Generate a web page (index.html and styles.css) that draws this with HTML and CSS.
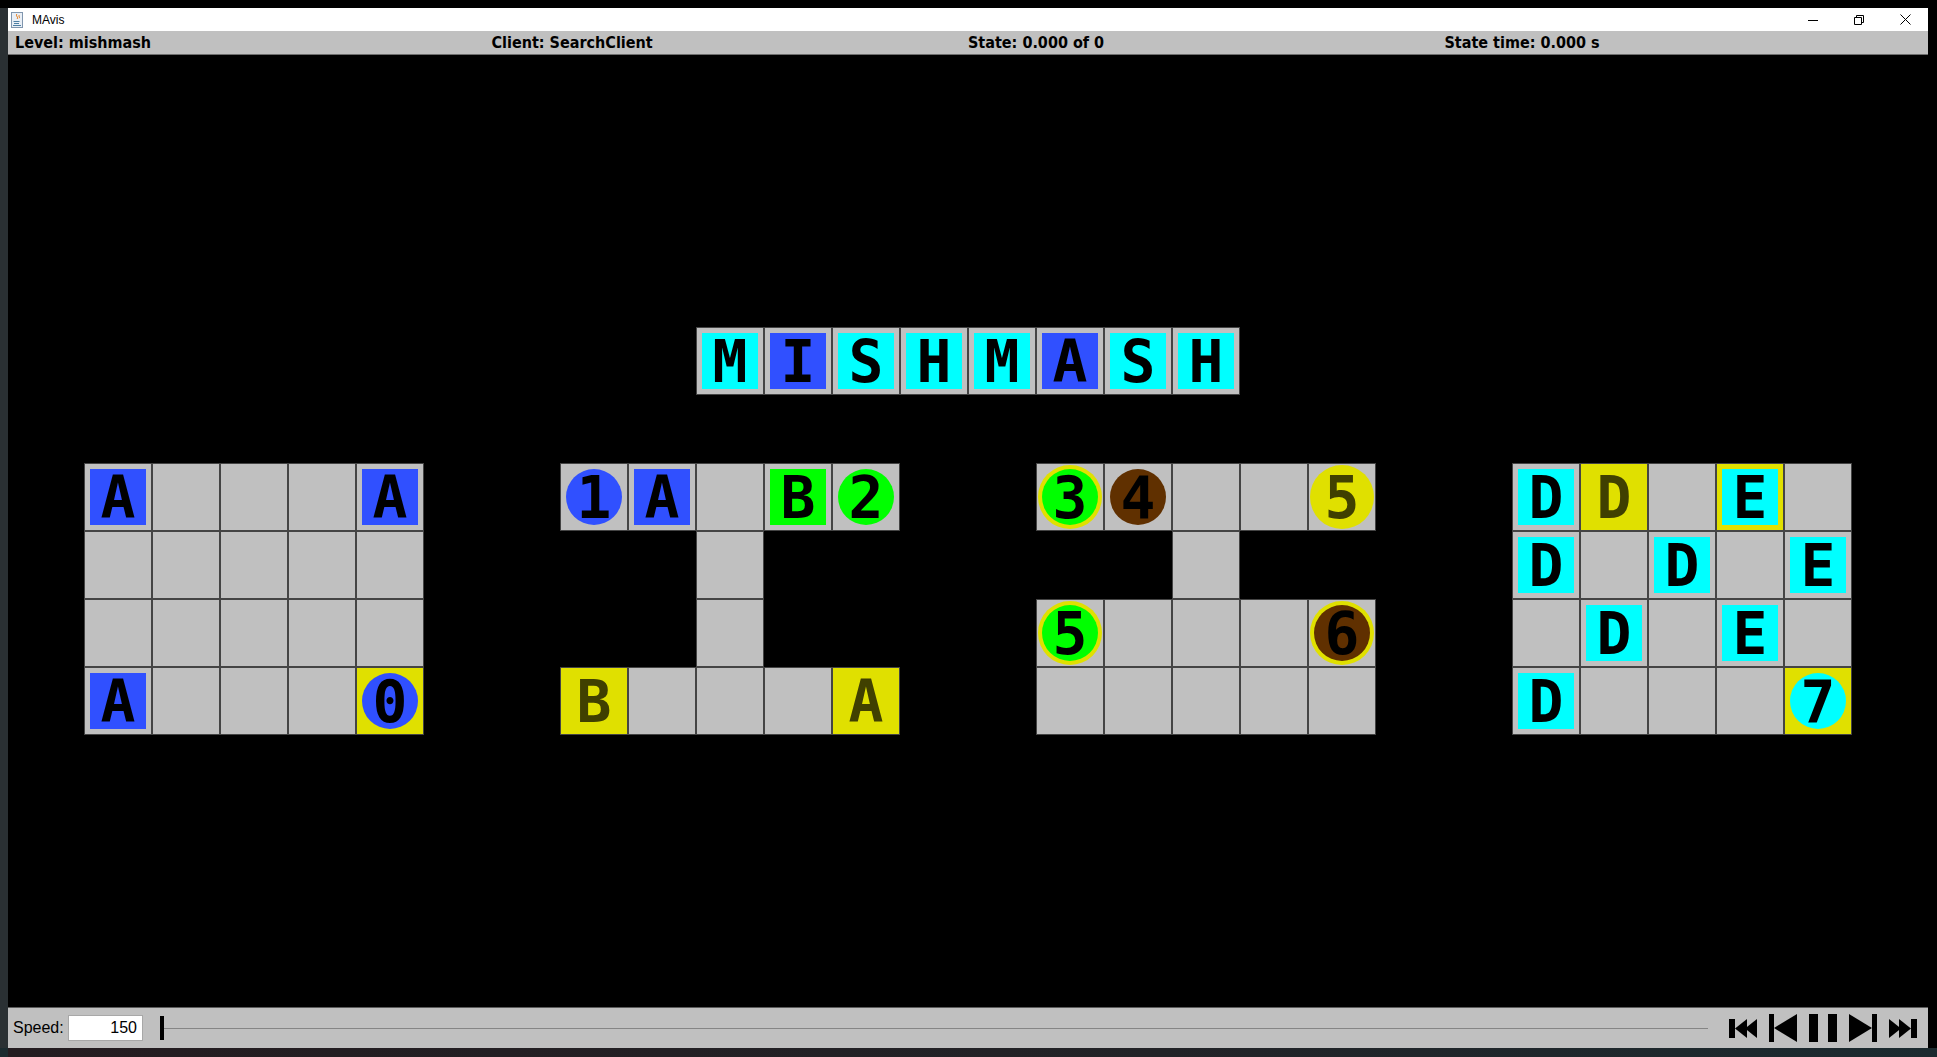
FILE: index.html
```html
<!DOCTYPE html>
<html lang="en">
<head>
<meta charset="utf-8">
<title>MAvis</title>
<link rel="stylesheet" href="styles.css">
</head>
<body>
<div class="desktop">
  <div class="side-left"></div>
  <div class="window-col">
    <div class="window">
      <div class="titlebar">
        <svg class="app-icon" width="12" height="16" viewBox="0 0 12 16">
          <rect x="0.5" y="0.5" width="11" height="15" fill="#e9eff6" stroke="#8096ae"/>
          <path d="M6 2c-2 2 2 3 0 5M8.2 3.2c-1 1 1 2 0 3" stroke="#e76f00" fill="none"/>
          <path d="M2.5 9.5h6M3 11.5h5M2 13.5h8" stroke="#4d7fa3" fill="none"/>
        </svg>
        <span class="app-title">MAvis</span>
        <div class="win-controls">
          <div class="win-btn"><svg width="10" height="10" viewBox="0 0 10 10"><path d="M0 5.5h10" stroke="#000" fill="none"/></svg></div>
          <div class="win-btn"><svg width="10" height="10" viewBox="0 0 10 10"><path d="M0.5 2.5h7v7h-7z M2.5 2.5v-2h7v7h-2" stroke="#000" fill="none"/></svg></div>
          <div class="win-btn"><svg width="11" height="11" viewBox="0 0 11 11"><path d="M0.5 0.5l10 10M10.5 0.5l-10 10" stroke="#000" fill="none"/></svg></div>
        </div>
      </div>
      <div class="statusbar">
        <span>Level: mishmash</span>
        <span>Client: SearchClient</span>
        <span>State: 0.000 of 0</span>
        <span>State time: 0.000 s</span>
      </div>
      <div class="canvas">
        <div class="map">
          <div class="title-row">
            <div class="cell floor"><div class="box cyan"><span class="glyph">M</span></div></div>
            <div class="cell floor"><div class="box blue"><span class="glyph">I</span></div></div>
            <div class="cell floor"><div class="box cyan"><span class="glyph">S</span></div></div>
            <div class="cell floor"><div class="box cyan"><span class="glyph">H</span></div></div>
            <div class="cell floor"><div class="box cyan"><span class="glyph">M</span></div></div>
            <div class="cell floor"><div class="box blue"><span class="glyph">A</span></div></div>
            <div class="cell floor"><div class="box cyan"><span class="glyph">S</span></div></div>
            <div class="cell floor"><div class="box cyan"><span class="glyph">H</span></div></div>
          </div>
          <div class="rooms">
            <div class="room">
              <div class="cell floor"><div class="box blue"><span class="glyph">A</span></div></div>
              <div class="cell floor"></div>
              <div class="cell floor"></div>
              <div class="cell floor"></div>
              <div class="cell floor"><div class="box blue"><span class="glyph">A</span></div></div>

              <div class="cell floor"></div>
              <div class="cell floor"></div>
              <div class="cell floor"></div>
              <div class="cell floor"></div>
              <div class="cell floor"></div>

              <div class="cell floor"></div>
              <div class="cell floor"></div>
              <div class="cell floor"></div>
              <div class="cell floor"></div>
              <div class="cell floor"></div>

              <div class="cell floor"><div class="box blue"><span class="glyph">A</span></div></div>
              <div class="cell floor"></div>
              <div class="cell floor"></div>
              <div class="cell floor"></div>
              <div class="cell floor goal"><div class="agent blue"><span class="glyph">0</span></div></div>
            </div>

            <div class="room">
              <div class="cell floor"><div class="agent blue"><span class="glyph">1</span></div></div>
              <div class="cell floor"><div class="box blue"><span class="glyph">A</span></div></div>
              <div class="cell floor"></div>
              <div class="cell floor"><div class="box green"><span class="glyph">B</span></div></div>
              <div class="cell floor"><div class="agent green"><span class="glyph">2</span></div></div>

              <div class="cell wall"></div>
              <div class="cell wall"></div>
              <div class="cell floor"></div>
              <div class="cell wall"></div>
              <div class="cell wall"></div>

              <div class="cell wall"></div>
              <div class="cell wall"></div>
              <div class="cell floor"></div>
              <div class="cell wall"></div>
              <div class="cell wall"></div>

              <div class="cell floor goal"><span class="glyph goal-text">B</span></div>
              <div class="cell floor"></div>
              <div class="cell floor"></div>
              <div class="cell floor"></div>
              <div class="cell floor goal"><span class="glyph goal-text">A</span></div>
            </div>

            <div class="room">
              <div class="cell floor"><div class="ring"><div class="agent green"><span class="glyph">3</span></div></div></div>
              <div class="cell floor"><div class="agent brown"><span class="glyph">4</span></div></div>
              <div class="cell floor"></div>
              <div class="cell floor"></div>
              <div class="cell floor"><div class="ring"><span class="glyph goal-text">5</span></div></div>

              <div class="cell wall"></div>
              <div class="cell wall"></div>
              <div class="cell floor"></div>
              <div class="cell wall"></div>
              <div class="cell wall"></div>

              <div class="cell floor"><div class="ring"><div class="agent green"><span class="glyph">5</span></div></div></div>
              <div class="cell floor"></div>
              <div class="cell floor"></div>
              <div class="cell floor"></div>
              <div class="cell floor"><div class="ring"><div class="agent brown"><span class="glyph">6</span></div></div></div>

              <div class="cell floor"></div>
              <div class="cell floor"></div>
              <div class="cell floor"></div>
              <div class="cell floor"></div>
              <div class="cell floor"></div>
            </div>

            <div class="room">
              <div class="cell floor"><div class="box cyan"><span class="glyph">D</span></div></div>
              <div class="cell floor goal"><span class="glyph goal-text">D</span></div>
              <div class="cell floor"></div>
              <div class="cell floor goal"><div class="box cyan"><span class="glyph">E</span></div></div>
              <div class="cell floor"></div>

              <div class="cell floor"><div class="box cyan"><span class="glyph">D</span></div></div>
              <div class="cell floor"></div>
              <div class="cell floor"><div class="box cyan"><span class="glyph">D</span></div></div>
              <div class="cell floor"></div>
              <div class="cell floor"><div class="box cyan"><span class="glyph">E</span></div></div>

              <div class="cell floor"></div>
              <div class="cell floor"><div class="box cyan"><span class="glyph">D</span></div></div>
              <div class="cell floor"></div>
              <div class="cell floor"><div class="box cyan"><span class="glyph">E</span></div></div>
              <div class="cell floor"></div>

              <div class="cell floor"><div class="box cyan"><span class="glyph">D</span></div></div>
              <div class="cell floor"></div>
              <div class="cell floor"></div>
              <div class="cell floor"></div>
              <div class="cell floor goal"><div class="agent cyan"><span class="glyph">7</span></div></div>
            </div>
          </div>
        </div>
      </div>
      <div class="controls">
        <span class="speed-label">Speed:</span>
        <div class="speed-field">150</div>
        <div class="slider">
          <div class="thumb"></div>
          <div class="track"></div>
        </div>
        <div class="buttons">
          <svg width="28" height="19" viewBox="0 0 28 19"><rect x="0" y="0" width="6" height="19"/><polygon points="6,9.5 18,0 18,19"/><polygon points="16,9.5 28,0 28,19"/></svg>
          <svg width="28" height="28" viewBox="0 0 28 28"><rect x="0" y="0" width="5" height="28"/><polygon points="5,14 28,0 28,28"/></svg>
          <svg width="28" height="28" viewBox="0 0 28 28"><rect x="0" y="0" width="9" height="28"/><rect x="19" y="0" width="9" height="28"/></svg>
          <svg width="28" height="28" viewBox="0 0 28 28"><polygon points="0,0 23,14 0,28"/><rect x="23" y="0" width="5" height="28"/></svg>
          <svg width="28" height="19" viewBox="0 0 28 19"><polygon points="0,0 12,9.5 0,19"/><polygon points="10,0 22,9.5 10,19"/><rect x="22" y="0" width="6" height="19"/></svg>
        </div>
      </div>
    </div>
  </div>
  <div class="side-right"></div>
</div>
<div class="taskbar"></div>
</body>
</html>
```

FILE: styles.css
```css
* {
  box-sizing: border-box;
}

html,
body {
  margin: 0;
  padding: 0;
}

body {
  width: 1937px;
  height: 1057px;
  overflow: hidden;
  background: #000;
  font-family: "Liberation Sans", Arial, sans-serif;
  color: #000;
}

.desktop {
  display: flex;
  height: 1048px;
}

.side-left {
  width: 8px;
  background: linear-gradient(#000 0, #000 8px, #2a3033 8px, #2a3033 100%);
}

.side-right {
  width: 9px;
  background: #000;
}

.window-col {
  width: 1920px;
  padding-top: 8px;
  display: flex;
  flex-direction: column;
}

.window {
  height: 1040px;
  display: flex;
  flex-direction: column;
}

/* title bar */
.titlebar {
  height: 23px;
  background: #fff;
  display: flex;
  align-items: center;
}

.app-icon {
  margin-left: 3px;
  display: block;
}

.app-title {
  margin-left: 9px;
  font-size: 12px;
  font-family: "Liberation Sans", Arial, sans-serif;
}

.win-controls {
  margin-left: auto;
  display: flex;
  height: 100%;
}

.win-btn {
  width: 46px;
  display: flex;
  align-items: center;
  justify-content: center;
}

.win-btn svg {
  display: block;
}

/* status bar */
.statusbar {
  height: 24px;
  background: #c0c0c0;
  border-bottom: 1px solid #6e6e6e;
  display: grid;
  grid-template-columns: repeat(4, 1fr);
  align-items: center;
  padding: 0 7px;
  font-family: "DejaVu Sans Condensed", "DejaVu Sans", sans-serif;
  font-stretch: condensed;
  font-weight: bold;
  font-size: 16px;
  white-space: nowrap;
}

/* level canvas */
.canvas {
  flex: 1;
  background: #000;
  display: flex;
  align-items: center;
  justify-content: center;
}

.map {
  display: flex;
  flex-direction: column;
  align-items: center;
  gap: 68px;
}

.title-row {
  display: flex;
}

.rooms {
  display: flex;
  gap: 136px;
}

.room {
  display: grid;
  grid-template-columns: repeat(5, 68px);
  grid-auto-rows: 68px;
}

.cell {
  width: 68px;
  height: 68px;
}

.floor {
  background: #c0c0c0;
  border: 1px solid #444;
  display: flex;
  align-items: center;
  justify-content: center;
}

.floor.goal {
  background: #e0e000;
}

.box {
  width: 56px;
  height: 56px;
  display: flex;
  align-items: center;
  justify-content: center;
}

.agent {
  width: 56px;
  height: 56px;
  border-radius: 50%;
  display: flex;
  align-items: center;
  justify-content: center;
}

.ring {
  width: 64px;
  height: 64px;
  border-radius: 50%;
  background: #e0e000;
  display: flex;
  align-items: center;
  justify-content: center;
}

.blue {
  background: #3050ff;
}

.cyan {
  background: #00ffff;
}

.green {
  background: #00ff00;
}

.brown {
  background: #603000;
}

.glyph {
  display: block;
  font-family: "DejaVu Sans Mono", monospace;
  font-weight: bold;
  font-size: 58px;
  line-height: 58px;
  padding-top: 2px;
  color: #000;
}

.goal-text {
  color: #404000;
}

/* bottom controls */
.controls {
  height: 41px;
  background: #c0c0c0;
  border-top: 1px solid #5c5c5c;
  display: flex;
  align-items: center;
  padding: 0 11px 0 5px;
}

.speed-label {
  font-size: 16px;
  width: 50px;
  white-space: nowrap;
}

.speed-field {
  margin-left: 5px;
  width: 75px;
  height: 26px;
  background: #fff;
  border: 1px solid #a8a8a8;
  font-size: 16px;
  line-height: 24px;
  text-align: right;
  padding-right: 5px;
}

.slider {
  flex: 1;
  margin: 0 21px 0 17px;
  height: 24px;
  display: flex;
  align-items: center;
}

.thumb {
  width: 4px;
  height: 24px;
  background: #000;
}

.track {
  flex: 1;
  height: 1px;
  background: #858585;
}

.buttons {
  display: flex;
  align-items: center;
  gap: 12px;
}

.buttons svg {
  display: block;
  fill: #000;
}

.taskbar {
  height: 9px;
  background: linear-gradient(90deg, #1b2b2f 0, #1b2b2f 8px, #241c20 8px, #222327 60%, #1c2b30 100%);
}
```
